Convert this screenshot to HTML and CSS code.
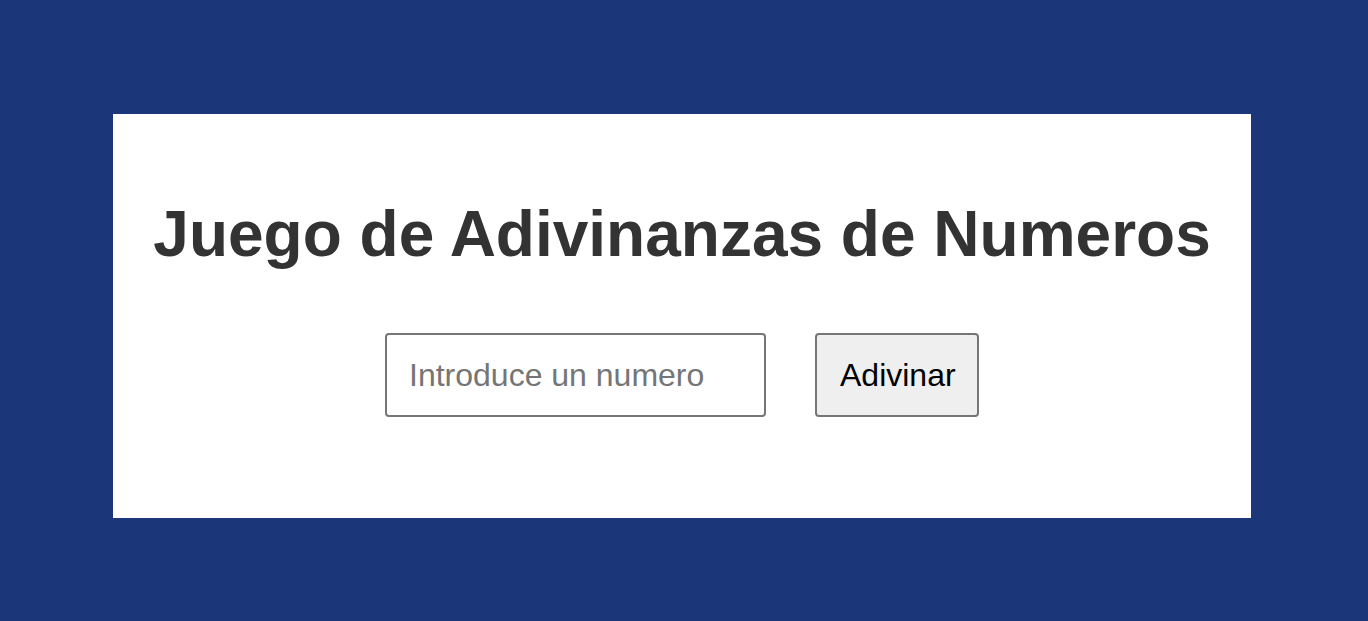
FILE: index.html
```html
<!DOCTYPE html>
<html lang="es">
<head>
<meta charset="utf-8">
<title>Juego de Adivinanzas de Numeros</title>
<link rel="stylesheet" href="styles.css">
</head>
<body>
<main class="card">
  <h1 class="title">Juego de Adivinanzas de Numeros</h1>
  <div class="row">
    <input class="guess-input" type="number" placeholder="Introduce un numero">
    <button class="guess-btn" type="button">Adivinar</button>
  </div>
</main>
</body>
</html>
```
FILE: styles.css
```css
html, body {
  margin: 0;
  padding: 0;
}
body {
  background: #1b3679;
  font-family: "Liberation Sans", Arial, sans-serif;
  padding-top: 114px;
  height: 621px;
  box-sizing: border-box;
}
.card {
  box-sizing: border-box;
  width: 1138px;
  margin-left: 113px;
  background: #ffffff;
  padding: 84px 0 101px;
  display: flex;
  flex-direction: column;
  align-items: center;
}
.title {
  margin: 0 0 63px;
  font-size: 64px;
  line-height: 72px;
  font-weight: bold;
  color: #333333;
  text-align: center;
}
.row {
  display: flex;
  gap: 49px;
  align-items: center;
}
.guess-input {
  box-sizing: border-box;
  width: 381px;
  height: 84px;
  padding: 0 22px;
  font-family: "Liberation Sans", Arial, sans-serif;
  font-size: 32px;
  color: #000;
  background: #fff;
  border: 2px solid #767676;
  border-radius: 4px;
  outline: none;
  -moz-appearance: textfield;
}
.guess-input::placeholder {
  color: #757575;
}
.guess-input::-webkit-outer-spin-button,
.guess-input::-webkit-inner-spin-button {
  -webkit-appearance: none;
  margin: 0;
}
.guess-btn {
  box-sizing: border-box;
  width: 164px;
  height: 84px;
  padding: 0 23px;
  font-family: "Liberation Sans", Arial, sans-serif;
  font-size: 32px;
  color: #000;
  background: #efefef;
  border: 2px solid #767676;
  border-radius: 4px;
}
```
